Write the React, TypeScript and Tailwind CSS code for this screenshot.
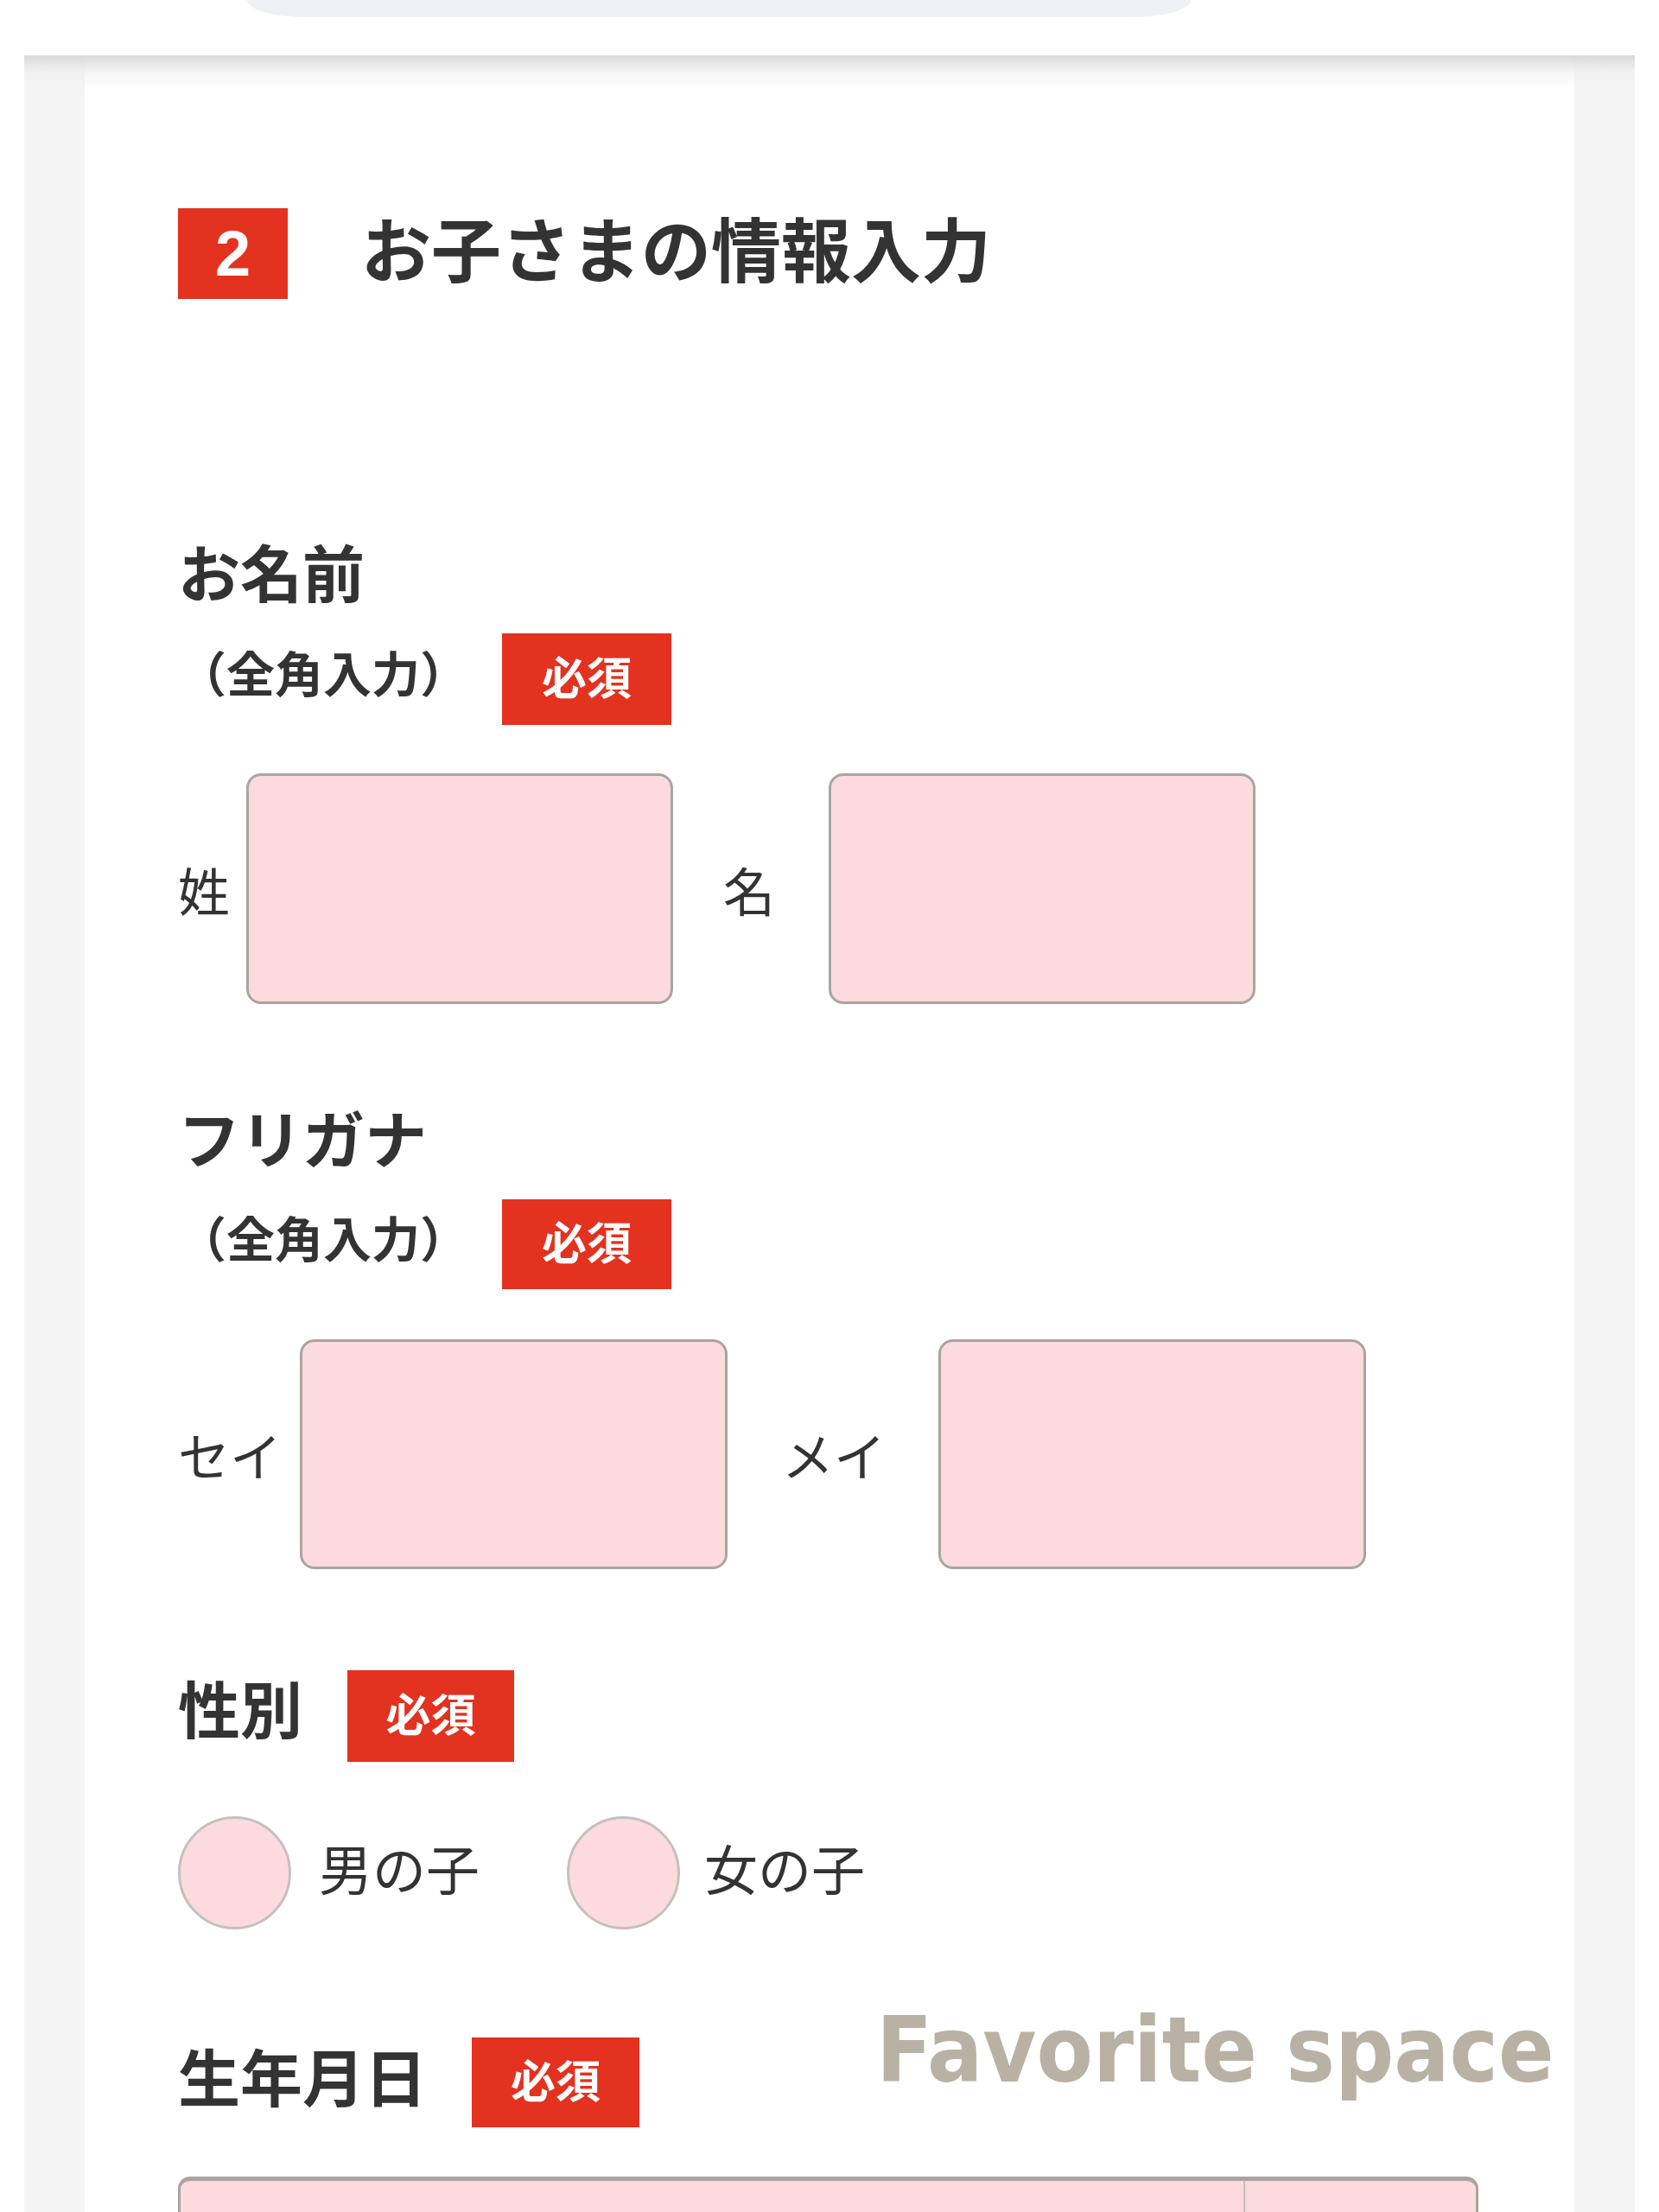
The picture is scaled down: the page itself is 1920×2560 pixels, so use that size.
import React from "react";

const Badge = ({ w, h }: { w: string; h: string }) => (
  <div
    className={`${w} ${h} shrink-0 bg-[#e3321f] flex items-center justify-center text-white font-bold text-[52px] leading-none pb-[8px]`}
  >
    必須
  </div>
);

export default function App() {
  return (
    <div className="w-[1920px] h-[2560px] bg-white overflow-hidden relative font-['Noto_Sans_CJK_JP','Noto_Sans',sans-serif] text-[#333333]">
      {/* top pill remnant */}
      <div className="h-[64px]">
        <div className="ml-[286px] w-[1092px] h-[20px] bg-[#eef1f4] rounded-bl-[70px_20px] rounded-br-[70px_20px]" />
      </div>

      {/* gray frame */}
      <div className="relative mx-[28px] h-[2496px] bg-[#f4f4f4] flex overflow-hidden">
        <div className="ml-[70px] w-[1724px] bg-white pl-[108px] flex flex-col">
          {/* heading */}
          <div className="shrink-0 mt-[177px] h-[105px] flex items-center">
            <div className="w-[127px] h-[105px] bg-[#e3321f] flex items-center justify-center text-white font-['Liberation_Sans',sans-serif] font-bold text-[74px] leading-none">
              2
            </div>
            <div className="ml-[85px] -mt-[18px] text-[81px] font-bold leading-none">
              お子さまの情報入力
            </div>
          </div>

          {/* お名前 */}
          <div className="shrink-0 mt-[283px] h-[72px] flex items-center text-[72px] font-bold leading-none">
            <span className="-mt-[10px]">お名前</span>
          </div>
          <div className="shrink-0 mt-[32px] h-[106px] flex items-center">
            <div className="text-[56px] font-bold leading-none w-[336px] -mt-[18px]">（全角入力）</div>
            <div className="ml-[39px]">
              <Badge w="w-[196px]" h="h-[106px]" />
            </div>
          </div>
          <div className="shrink-0 mt-[56px] h-[267px] flex items-center">
            <div className="text-[60px] leading-none">姓</div>
            <div className="ml-[19px] w-[494px] h-[267px] rounded-[17px] border-[3px] border-[#a9a4a2] bg-[#fddadd]" />
            <div className="ml-[58px] text-[60px] leading-none">名</div>
            <div className="ml-[62px] w-[494px] h-[267px] rounded-[17px] border-[3px] border-[#a9a4a2] bg-[#fddadd]" />
          </div>

          {/* フリガナ */}
          <div className="shrink-0 mt-[120px] h-[72px] flex items-center text-[72px] font-bold leading-none">
            <span className="-mt-[6px]">フリガナ</span>
          </div>
          <div className="shrink-0 mt-[34px] h-[104px] flex items-center">
            <div className="text-[56px] font-bold leading-none w-[336px] -mt-[18px]">（全角入力）</div>
            <div className="ml-[39px]">
              <Badge w="w-[196px]" h="h-[104px]" />
            </div>
          </div>
          <div className="shrink-0 mt-[58px] h-[266px] flex items-center">
            <div className="text-[60px] leading-none">セイ</div>
            <div className="ml-[21px] w-[495px] h-[266px] rounded-[17px] border-[3px] border-[#a9a4a2] bg-[#fddadd]" />
            <div className="ml-[63px] text-[60px] leading-none">メイ</div>
            <div className="ml-[61px] w-[495px] h-[266px] rounded-[17px] border-[3px] border-[#a9a4a2] bg-[#fddadd]" />
          </div>

          {/* 性別 */}
          <div className="shrink-0 mt-[117px] h-[106px] flex items-center">
            <div className="text-[72px] font-bold leading-none -mt-[22px]">性別</div>
            <div className="ml-[52px]">
              <Badge w="w-[193px]" h="h-[106px]" />
            </div>
          </div>
          <div className="shrink-0 mt-[62px] h-[132px] flex items-center">
            <div className="w-[131px] h-[131px] rounded-full border-[3px] border-[#c4c0bf] bg-[#fddadd]" />
            <div className="ml-[32px] text-[62px] leading-none -mt-[12px]">男の子</div>
            <div className="ml-[101px] w-[131px] h-[131px] rounded-full border-[3px] border-[#c4c0bf] bg-[#fddadd]" />
            <div className="ml-[28px] text-[62px] leading-none -mt-[12px]">女の子</div>
          </div>

          {/* 生年月日 */}
          <div className="shrink-0 mt-[125px] h-[104px] flex items-center">
            <div className="text-[72px] font-bold leading-none -mt-[18px]">生年月日</div>
            <div className="ml-[52px]">
              <Badge w="w-[194px]" h="h-[104px]" />
            </div>
          </div>
          <div className="shrink-0 mt-[57px] h-[200px] w-[1505px] flex rounded-t-[14px] border-[3px] border-t-[5px] border-[#a9a4a2] bg-[#fddadd]">
            <div className="w-[1230px] h-full" />
            <div className="flex-1 h-full border-l-[2px] border-[#c4bfbd]" />
          </div>
        </div>
        {/* top inner shadow */}
        <div className="absolute top-0 left-0 right-0 h-[40px] bg-gradient-to-b from-[#d9d9d9] via-[#f0f0f0]/60 to-transparent pointer-events-none" />
      </div>

      {/* watermark */}
      <div className="absolute left-[1014px] top-[2320px] font-['DejaVu_Sans_Condensed','DejaVu_Sans',sans-serif] font-bold text-[106px] leading-none text-[#b9b1a3] whitespace-nowrap">
        Favorite space
      </div>
    </div>
  );
}
